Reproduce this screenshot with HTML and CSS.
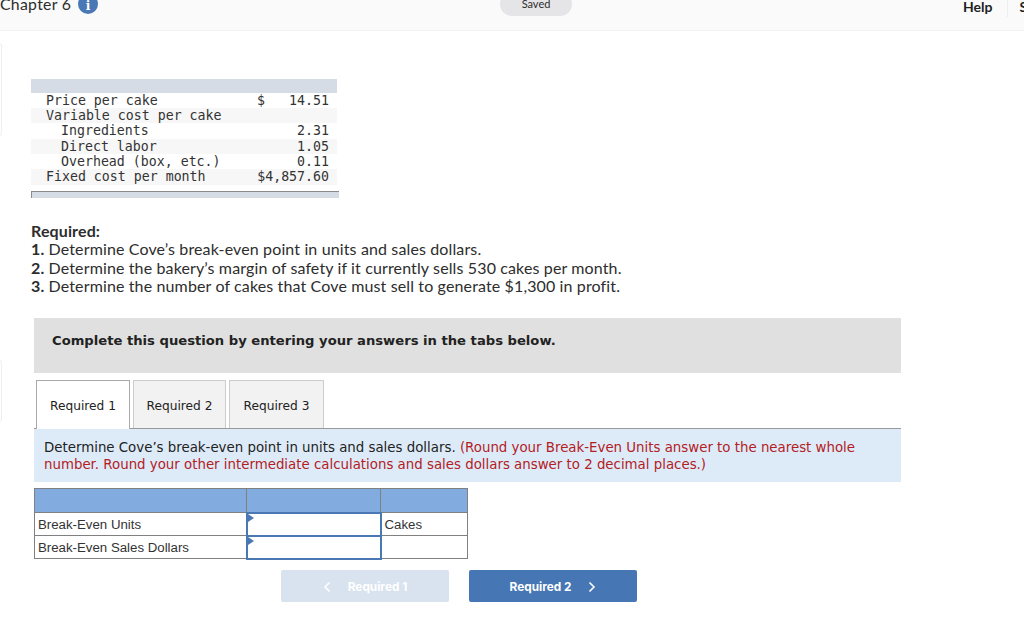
FILE: index.html
```html
<!DOCTYPE html>
<html lang="en">
<head>
    <meta charset="UTF-8">
    <title>Chapter 6</title>
    <link rel="stylesheet" href="styles.css">
</head>
<body>

    <div class="topbar">
        <div class="chapter">
            <span>Chapter 6</span>
            <span class="info">i</span>
        </div>
        <div class="saved">Saved</div>
        <div class="help">Help</div>
        <div class="save-cut">S</div>
    </div>

    <div class="side-mark side-mark-top"></div>
    <div class="side-mark side-mark-bottom"></div>

    <div class="content">
        <div class="data-table">
            <div class="data-head"></div>
            <div class="data-row"><span class="lbl">Price per cake</span><span class="cur">$</span><span class="val">14.51</span></div>
            <div class="data-row alt"><span class="lbl">Variable cost per cake</span><span class="cur"></span><span class="val"></span></div>
            <div class="data-row"><span class="lbl sub">Ingredients</span><span class="cur"></span><span class="val">2.31</span></div>
            <div class="data-row alt"><span class="lbl sub">Direct labor</span><span class="cur"></span><span class="val">1.05</span></div>
            <div class="data-row"><span class="lbl sub">Overhead (box, etc.)</span><span class="cur"></span><span class="val">0.11</span></div>
            <div class="data-row alt"><span class="lbl">Fixed cost per month</span><span class="val wide">$4,857.60</span></div>
            <div class="data-foot"></div>
        </div>

        <div class="required">
            <div class="req-title">Required:</div>
            <div><b>1.</b> Determine Cove’s break-even point in units and sales dollars.</div>
            <div><b>2.</b> Determine the bakery’s margin of safety if it currently sells 530 cakes per month.</div>
            <div><b>3.</b> Determine the number of cakes that Cove must sell to generate $1,300 in profit.</div>
        </div>

        <div class="complete">Complete this question by entering your answers in the tabs below.</div>

        <div class="tabs">
            <div class="tab active">Required 1</div>
            <div class="tab">Required 2</div>
            <div class="tab">Required 3</div>
        </div>

        <div class="instructions">
            Determine Cove’s break-even point in units and sales dollars. <span class="red">(Round your Break-Even Units answer to the nearest whole number. Round your other intermediate calculations and sales dollars answer to 2 decimal places.)</span>
        </div>

        <table class="answer">
            <tr class="answer-head"><td class="c1"></td><td class="c2"></td><td class="c3"></td></tr>
            <tr>
                <td class="c1">Break-Even Units</td>
                <td class="c2 field"></td>
                <td class="c3">Cakes</td>
            </tr>
            <tr>
                <td class="c1">Break-Even Sales Dollars</td>
                <td class="c2 field"></td>
                <td class="c3"></td>
            </tr>
        </table>

        <div class="nav">
            <button class="nav-btn disabled">
                <svg class="chev" width="8" height="12" viewBox="0 0 8 12"><path d="M6.5 1.5 2 6l4.500 4.500" fill="none" stroke="#fff" stroke-width="1.6"/></svg>
                <span>Required 1</span>
            </button>
            <button class="nav-btn">
                <span>Required 2</span>
                <svg class="chev" width="8" height="12" viewBox="0 0 8 12"><path d="M1.500 1.500 6 6l-4.500 4.500" fill="none" stroke="#fff" stroke-width="1.6"/></svg>
            </button>
        </div>
    </div>

</body>
</html>
```

FILE: styles.css
```css
html, body {
    margin: 0;
    padding: 0;
    height: 637px;
    overflow: hidden;
    background-color: white;
}
body {
    font-family: Lato, "Liberation Sans", sans-serif;
    color: #2d2d2d;
    position: relative;
}
.topbar {
    height: 30px;
    background-color: #fafafa;
    border-bottom: 1px solid #f2f2f2;
    display: flex;
    align-items: flex-start;
    overflow: hidden;
}
.chapter {
    display: flex;
    flex: none;
    align-items: center;
    gap: 7px;
    margin-top: -6px;
    font-size: 15.8px;
    line-height: 20px;
    letter-spacing: 0.3px;
    width: 500px;
    height: 20px;
}
.info {
    flex: none;
    width: 20px;
    height: 20px;
    border-radius: 50%;
    background-color: #4a78b5;
    color: white;
    font-family: "DejaVu Serif", serif;
    font-weight: bold;
    font-size: 12px;
    line-height: 24px;
    text-align: center;
}
.saved {
    flex: none;
    width: 72px;
    height: 24px;
    margin-top: -8px;
    background-color: #e5e4e7;
    border-radius: 12px;
    font-size: 11px;
    line-height: 23px;
    text-align: center;
}
.help {
    flex: none;
    margin-left: 391px;
    font-size: 14px;
    font-weight: bold;
    line-height: 14px;
    color: #222;
}
.save-cut {
    flex: none;
    margin-left: 15px;
    padding-left: 11px;
    height: 17px;
    border-left: 1px solid #eeeeee;
    font-size: 14px;
    font-weight: bold;
    line-height: 14px;
    color: #222;
}
.side-mark {
    position: absolute;
    left: -6px;
    width: 6px;
    background-color: white;
    border: 1px solid #eeeeee;
    border-radius: 3px;
}
.side-mark-top {
    top: 43px;
    height: 91px;
}
.side-mark-bottom {
    top: 360px;
    height: 60px;
}
.content {
    padding: 48px 0 0 31px;
}
.data-table {
    width: 306px;
    font-family: "DejaVu Sans Mono", monospace;
    font-size: 13.25px;
    line-height: 15.3px;
    color: #333;
}
.data-head {
    height: 13.8px;
    background-color: #d6dce6;
}
.data-row {
    display: flex;
    height: 15.3px;
    padding-left: 15px;
    padding-right: 8px;
}
.data-row.alt {
    background-color: #f7f7f7;
}
.lbl {
    width: 211px;
    white-space: pre;
}
.lbl.sub {
    padding-left: 15px;
    width: 196px;
}
.cur {
    width: 24px;
}
.val {
    width: 48px;
    text-align: right;
}
.val.wide {
    width: 72px;
}
.data-foot {
    width: 307px;
    height: 6px;
    margin-top: 6.5px;
    background-color: #d6dce6;
    border-top: 1px solid #8b8b8b;
    border-left: 1px solid #8b8b8b;
}
.required {
    margin-top: 23px;
    font-size: 16px;
    letter-spacing: 0.13px;
    line-height: 18.3px;
    color: #2d2d2d;
}
.req-title {
    font-weight: bold;
    line-height: 19.3px;
}
.complete {
    width: 849px;
    height: 55px;
    margin: 23px 0 0 3px;
    padding-left: 18px;
    background-color: #e0e0e0;
    font-family: "DejaVu Sans", sans-serif;
    font-size: 13.15px;
    font-weight: bold;
    line-height: 45px;
    color: #222;
}
.tabs {
    display: flex;
    gap: 3px;
    margin: 7px 0 0 5px;
    height: 48px;
}
.tab {
    width: 93px;
    height: 48px;
    box-sizing: border-box;
    background-color: #f2f2f2;
    border: 1px solid #cccccc;
    border-bottom: none;
    font-family: "DejaVu Sans", sans-serif;
    font-size: 12.2px;
    line-height: 51px;
    text-align: center;
    color: #222;
}
.tab:last-child {
    width: 95px;
}
.tab.active {
    width: 94px;
    background-color: white;
    border-color: #aaaaaa;
    height: 49px;
    position: relative;
    z-index: 1;
}
.instructions {
    width: 827px;
    height: 42px;
    margin-left: 3px;
    padding: 11px 30px 0 10px;
    background-color: #ddebf8;
    border-top: 1px solid #999999;
    font-family: "DejaVu Sans", sans-serif;
    font-size: 13.35px;
    line-height: 16.5px;
    color: #222;
}
.red {
    color: #b3201f;
}
.answer {
    margin: 6px 0 0 3px;
    border-collapse: collapse;
    table-layout: fixed;
    width: 433px;
    font-family: "Liberation Sans", Arial, sans-serif;
    font-size: 13.25px;
    color: #333;
}
.answer td {
    border: 1px solid #808080;
    height: 23px;
    padding: 0 3px;
    box-sizing: border-box;
}
.answer-head td {
    background-color: #82abdf;
    height: 24px;
}
.c1 {
    width: 212px;
}
.c2 {
    width: 134px;
}
.c3 {
    width: 87px;
}
.answer td.field {
    border: 2px solid #4a78b5;
    background-color: white;
    position: relative;
}
.answer td.field::before {
    content: "";
    position: absolute;
    top: 0;
    left: 0;
    border-left: 6px solid #4a78b5;
    border-top: 4px solid transparent;
    border-bottom: 4px solid transparent;
}
.nav {
    display: flex;
    gap: 20px;
    margin: 10px 0 0 250px;
}
.nav-btn {
    width: 168px;
    height: 32px;
    padding: 2px 0 0;
    display: flex;
    align-items: center;
    justify-content: center;
    gap: 17px;
    background-color: #4676b4;
    border: none;
    border-radius: 2px;
    font-family: Inter, "Liberation Sans", sans-serif;
    font-size: 11.8px;
    font-weight: bold;
    color: white;
}
.nav-btn.disabled {
    background-color: #d9e3ef;
}
```
